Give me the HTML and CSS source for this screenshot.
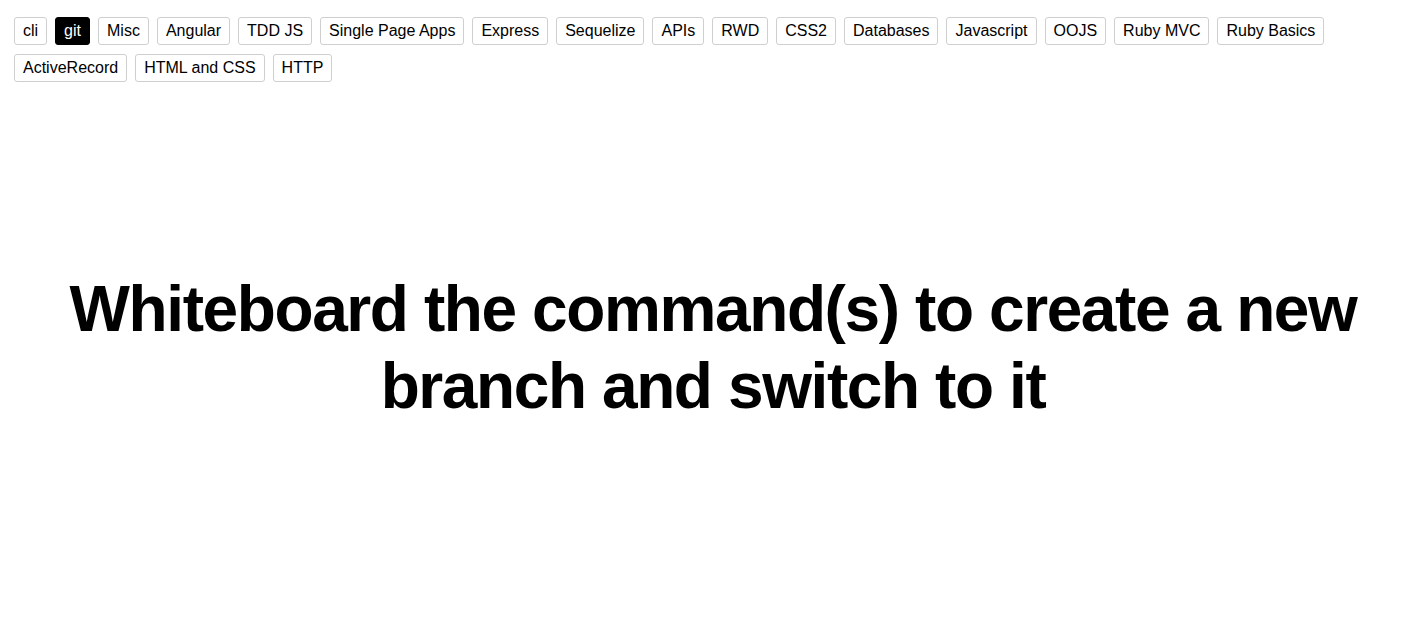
FILE: index.html
```html
<!DOCTYPE html>
<html lang="en">
<head>
<meta charset="utf-8">
<title>Flashcards</title>
<link rel="stylesheet" href="styles.css">
</head>
<body>
<div class="page">
  <nav class="decks">
    <button class="deck">cli</button>
    <button class="deck active">git</button>
    <button class="deck">Misc</button>
    <button class="deck">Angular</button>
    <button class="deck">TDD JS</button>
    <button class="deck">Single Page Apps</button>
    <button class="deck">Express</button>
    <button class="deck">Sequelize</button>
    <button class="deck">APIs</button>
    <button class="deck">RWD</button>
    <button class="deck">CSS2</button>
    <button class="deck">Databases</button>
    <button class="deck">Javascript</button>
    <button class="deck">OOJS</button>
    <button class="deck">Ruby MVC</button>
    <button class="deck">Ruby Basics</button>
    <button class="deck">ActiveRecord</button>
    <button class="deck">HTML and CSS</button>
    <button class="deck">HTTP</button>
  </nav>
  <main class="card">
    <h1 class="question">Whiteboard the command(s) to create a new branch and switch to it</h1>
  </main>
</div>
</body>
</html>
```
FILE: styles.css
```css
html, body {
  margin: 0;
  padding: 0;
  background: #fff;
}
body {
  font-family: "Liberation Sans", Arial, Helvetica, sans-serif;
  color: #000;
}
.page {
  padding-left: 14px;
}
.decks {
  display: flex;
  flex-wrap: wrap;
  gap: 9px 8px;
  padding-top: 17px;
}
.deck {
  font-family: "Liberation Sans", Arial, Helvetica, sans-serif;
  font-size: 16px;
  line-height: 18px;
  padding: 4px 8px;
  margin: 0;
  border: 1px solid #cfcfcf;
  border-radius: 3px;
  background: #fff;
  color: #000;
}
.deck.active {
  background: #000;
  border-color: #000;
  color: #fff;
}
.card {
  padding-top: 189px;
}
.question {
  margin: 0;
  text-align: center;
  font-size: 64px;
  line-height: 1.2;
  font-weight: bold;
  letter-spacing: -1.4px;
}
```
